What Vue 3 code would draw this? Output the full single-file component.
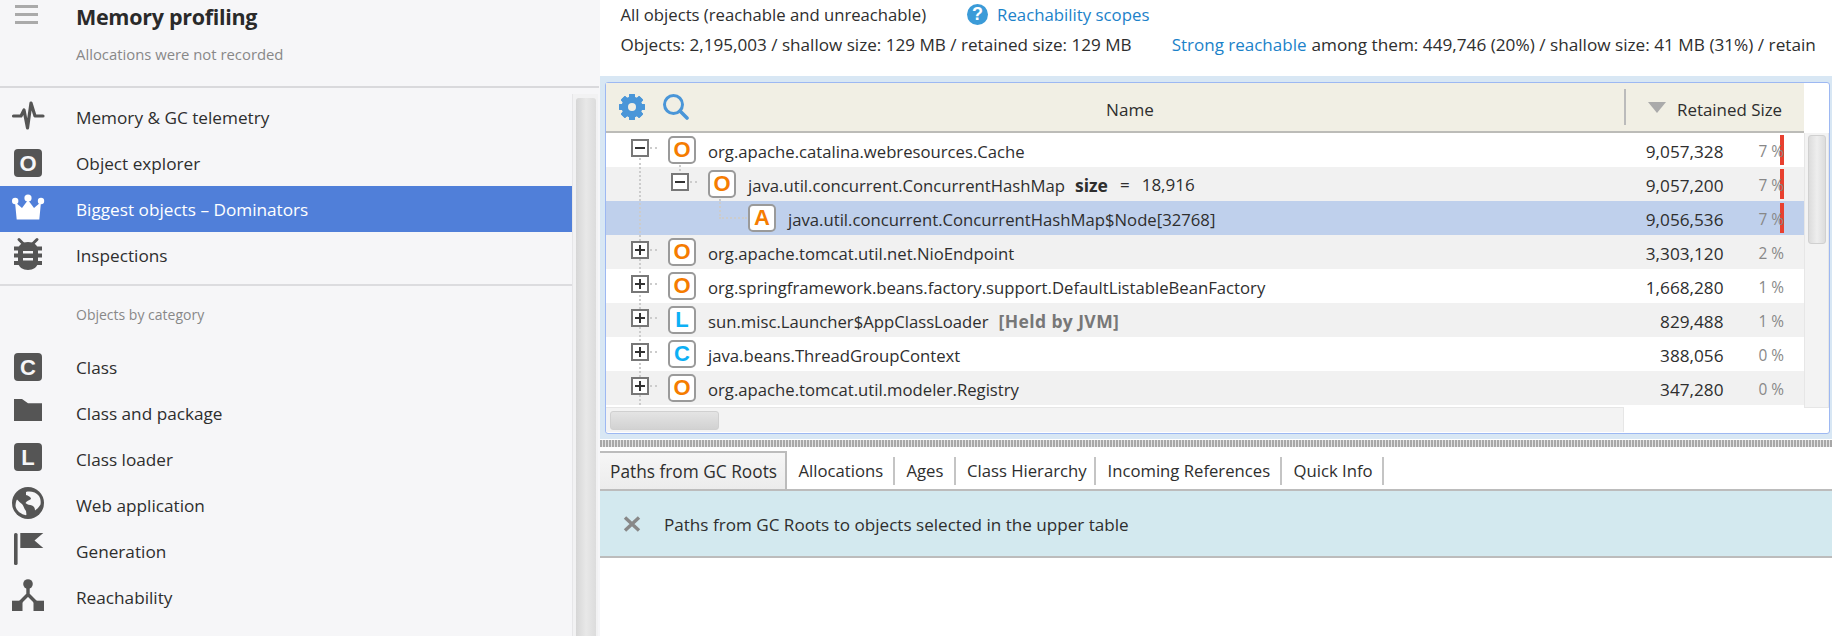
<script setup>
const teeth = [0, 45, 90, 135, 180, 225, 270, 315]
const rows = [
  { level: 0, toggle: 'minus', kind: 'O', name: 'org.apache.catalina.webresources.Cache', num: '9,057,328', pct: '7 %', bar: true, tone: 'white' },
  { level: 1, toggle: 'minus', kind: 'O', name: 'java.util.concurrent.ConcurrentHashMap', field: true, num: '9,057,200', pct: '7 %', bar: true, tone: 'gray' },
  { level: 2, toggle: '', kind: 'A', name: 'java.util.concurrent.ConcurrentHashMap$Node[32768]', num: '9,056,536', pct: '7 %', bar: true, tone: 'sel' },
  { level: 0, toggle: 'plus', kind: 'O', name: 'org.apache.tomcat.util.net.NioEndpoint', num: '3,303,120', pct: '2 %', tone: 'gray' },
  { level: 0, toggle: 'plus', kind: 'O', name: 'org.springframework.beans.factory.support.DefaultListableBeanFactory', num: '1,668,280', pct: '1 %', tone: 'white' },
  { level: 0, toggle: 'plus', kind: 'L', name: 'sun.misc.Launcher$AppClassLoader', held: '[Held by JVM]', num: '829,488', pct: '1 %', tone: 'gray' },
  { level: 0, toggle: 'plus', kind: 'C', name: 'java.beans.ThreadGroupContext', num: '388,056', pct: '0 %', tone: 'white' },
  { level: 0, toggle: 'plus', kind: 'O', name: 'org.apache.tomcat.util.modeler.Registry', num: '347,280', pct: '0 %', tone: 'gray' }
]
const tabs = [
  { label: 'Paths from GC Roots', width: 187 },
  { label: 'Allocations', width: 108 },
  { label: 'Ages', width: 60.5 },
  { label: 'Class Hierarchy', width: 140.5 },
  { label: 'Incoming References', width: 186 },
  { label: 'Quick Info', width: 102 }
]
</script>

<template>
  <div class="app">
    <aside class="side">
      <header class="side-head">
        <div class="burger"><i></i><i></i><i></i></div>
        <div class="head-text">
          <h1>Memory profiling</h1>
          <p>Allocations were not recorded</p>
        </div>
      </header>
      <div class="side-body">
        <nav class="nav">
          <div class="nav-row">
            <svg viewBox="0 0 32 32"><path d="M1.5 15H9L12 9L15.5 27L19 2L23 15H31" fill="none" stroke="#555" stroke-width="3.2" stroke-linecap="round" stroke-linejoin="round"/></svg>
            <span>Memory &amp; GC telemetry</span>
          </div>
          <div class="nav-row">
            <svg viewBox="0 0 32 32"><rect x="2" y="2" width="28" height="28" rx="4" fill="#555"/><text x="16" y="23.5" class="badge">O</text></svg>
            <span>Object explorer</span>
          </div>
          <div class="nav-row active">
            <svg viewBox="0 0 32 32" fill="#fff"><circle cx="3.2" cy="8" r="3.2"/><circle cx="16" cy="5" r="3.6"/><circle cx="29" cy="8" r="3.2"/><path d="M4.7 26.5L3 9L10 15L16 7L22 15L29 9L27.3 26.5Z"/></svg>
            <span>Biggest objects – Dominators</span>
          </div>
          <div class="nav-row">
            <svg viewBox="0 0 32 32" fill="#555">
              <path d="M7 0.5L11.5 5M25 0.5L20.5 5" stroke="#555" stroke-width="3" stroke-linecap="round"/>
              <path d="M6 12C6 6 10 3 16 3C22 3 26 6 26 12V23C26 28 21 31 16 31C11 31 6 28 6 23Z"/>
              <path d="M2 7.5H30V11.5H2ZM2 14.5H30V18.5H2ZM2 22H30V26H2Z"/>
              <path d="M11 12H21V14.5H11ZM11 19H21V21.5H11Z" fill="#f6f6f8"/>
            </svg>
            <span>Inspections</span>
          </div>
          <div class="nav-sep"></div>
          <div class="nav-cat">Objects by category</div>
          <div class="nav-row">
            <svg viewBox="0 0 32 32"><rect x="2" y="2" width="28" height="28" rx="4" fill="#555"/><text x="16" y="23.5" class="badge">C</text></svg>
            <span>Class</span>
          </div>
          <div class="nav-row">
            <svg viewBox="0 0 32 32"><path d="M2 2H10L16 6.3H30V24H2Z" fill="#555"/></svg>
            <span>Class and package</span>
          </div>
          <div class="nav-row">
            <svg viewBox="0 0 32 32"><rect x="2" y="0" width="28" height="28" rx="4" fill="#555"/><text x="16" y="21.5" class="badge">L</text></svg>
            <span>Class loader</span>
          </div>
          <div class="nav-row">
            <svg viewBox="0 0 32 32">
              <circle cx="16" cy="14" r="16" fill="#555"/>
              <path d="M3.5 17C3.5 14.5 4 12 5 10.5C7 12 8 14 10 15C12 17 12 20 14 22C14 24 15 25.5 14 26.3C8 25 4 21 3.5 17Z" fill="#f6f6f8"/>
              <path d="M14 3C18 1.8 24 3 27 7C28.5 9.5 29 12 28.5 15.5C27.5 17 25.5 20 23 21.5C23 19 22 17.5 20 16.5C18 15.5 15 16 13.5 14C14.5 12 17 11.5 19 10C19 8 16 6.5 14 6Z" fill="#f6f6f8"/>
            </svg>
            <span>Web application</span>
          </div>
          <div class="nav-row">
            <svg viewBox="0 0 32 32" fill="#555"><rect x="2" y="-2" width="3.6" height="32" rx="1.6"/><path d="M8.3 -2H31.3L22.5 5.5L31.3 13H8.3Z"/></svg>
            <span>Generation</span>
          </div>
          <div class="nav-row">
            <svg viewBox="0 0 32 32" fill="#555">
              <circle cx="16" cy="3" r="4.8"/>
              <path d="M16 5V13.5M7 22.5L16 13.5L25 22.5" fill="none" stroke="#555" stroke-width="3.4"/>
              <rect x="0" y="19.7" width="10.5" height="10.3"/><rect x="21.5" y="19.7" width="10.5" height="10.3"/>
            </svg>
            <span>Reachability</span>
          </div>
        </nav>
        <div class="side-scroll"><div class="side-thumb"></div></div>
      </div>
    </aside>

    <main class="main">
      <section class="info">
        <div class="info-line first">
          <span class="all">All objects (reachable and unreachable)</span>
          <span class="help">?</span>
          <a class="link">Reachability scopes</a>
        </div>
        <div class="info-line second">
          <span class="stat1">Objects: 2,195,003 / shallow size: 129 MB / retained size: 129 MB</span>
          <a class="link">Strong reachable</a>
          <span class="stat2">among them: 449,746 (20%) / shallow size: 41 MB (31%) / retain</span>
        </div>
      </section>

      <section class="glow">
        <div class="panel">
          <div class="table-col">
            <div class="thead">
              <div class="tools">
                <svg class="tool" viewBox="0 0 26 26">
                  <g fill="#4a96d8"><rect v-for="a in teeth" :key="a" x="10" y="0" width="6" height="26" rx="1" :transform="`rotate(${a} 13 13)`"/></g>
                  <circle cx="13" cy="13" r="8" fill="none" stroke="#4a96d8" stroke-width="5"/>
                  <circle cx="13" cy="13" r="4" fill="#f1efe4"/>
                </svg>
                <svg class="tool" viewBox="0 0 26 26">
                  <circle cx="10.5" cy="10.5" r="9" fill="none" stroke="#4a96d8" stroke-width="3"/>
                  <path d="M17 17L24 24" stroke="#4a96d8" stroke-width="3.6" stroke-linecap="round"/>
                </svg>
              </div>
              <div class="th-name">Name</div>
              <div class="th-size"><i class="sort"></i><span>Retained Size</span></div>
            </div>
            <div class="rows">
              <div v-for="r in rows" :key="r.name" class="row" :class="r.tone">
                <div class="cell-name" :class="'lv' + r.level">
                  <svg v-if="r.toggle" class="toggle" viewBox="0 0 18 18">
                    <path d="M19 9H29" stroke="#ccc" stroke-width="2" stroke-dasharray="2 3"/>
                    <rect x="1" y="1" width="16" height="16" fill="#fff" stroke="#777" stroke-width="2"/>
                    <path d="M4 9H14" stroke="#333" stroke-width="2"/>
                    <path v-if="r.toggle === 'plus'" d="M9 4V14" stroke="#333" stroke-width="2"/>
                  </svg>
                  <span v-else class="toggle"></span>
                  <span class="kind" :class="'k' + r.kind">{{ r.kind }}</span>
                  <span class="label">{{ r.name }}</span>
                  <span v-if="r.field" class="field"><b>size</b><span class="eq">=</span><span>18,916</span></span>
                  <b v-if="r.held" class="held">{{ r.held }}</b>
                </div>
                <div class="num">{{ r.num }}</div>
                <div class="pct"><i v-if="r.bar" class="bar"></i><span>{{ r.pct }}</span></div>
              </div>
              <i class="line-main"></i>
              <i class="line-second"></i>
              <i class="line-elbow"></i>
            </div>
            <div class="hscroll"><div class="htrack"><div class="hthumb"></div></div></div>
          </div>
          <div class="scroll-col">
            <div class="vtrack"><div class="vthumb"></div></div>
          </div>
        </div>
      </section>

      <div class="splitter"></div>

      <div class="tabs">
        <div v-for="(t, i) in tabs" :key="t.label" class="tab" :class="{ on: i === 0 }" :style="{ width: t.width + 'px' }">{{ t.label }}</div>
      </div>

      <div class="notice">
        <svg class="close" viewBox="0 0 18 16"><path d="M2 1.5L16 14.5M16 1.5L2 14.5" stroke="#888" stroke-width="3.4"/></svg>
        <span>Paths from GC Roots to objects selected in the upper table</span>
      </div>
    </main>
  </div>
</template>

<style>
html, body { margin: 0; background: #fff; }
</style>

<style scoped>
.app {
  width: 1832px;
  height: 636px;
  overflow: hidden;
  display: flex;
  font-family: "Open Sans", "Liberation Sans", sans-serif;
  font-size: 17.1px;
  color: #2e2e2e;
}
.side { width: 600px; flex: none; background: #f6f6f8; display: flex; flex-direction: column; }
.side-head { height: 86px; box-sizing: content-box; border-bottom: 2px solid #d9d9dc; display: flex; margin-right: 1px; }
.burger { width: 23px; height: 19px; margin: 5px 0 0 15px; display: flex; flex-direction: column; gap: 5px; }
.burger i { height: 3px; background: #aaa; display: block; }
.head-text { margin-left: 38px; }
h1 { margin: 3px 0 0; font-size: 21.5px; line-height: 28px; font-weight: 700; color: #2a2a2a; letter-spacing: -0.3px; }
.head-text p { margin: 13px 0 0; font-size: 14.85px; line-height: 20px; color: #888; }
.side-body { flex: 1; display: flex; min-height: 0; }
.nav { width: 572px; flex: none; padding-top: 6px; }
.nav-row { height: 46px; display: flex; align-items: center; padding-left: 12px; }
.nav-row span { font-size: 17.2px; }
.nav-row svg { width: 32px; height: 32px; margin-right: 32px; flex: none; overflow: visible; }
.nav-row.active { background: #507fd9; color: #fff; }
.nav-sep { height: 2px; background: #dcdcdf; margin-top: 6px; }
.nav-cat { height: 58px; box-sizing: border-box; padding: 19px 0 0 76px; line-height: 20px; font-size: 14px; color: #888; }
.badge { font-family: "Liberation Sans", sans-serif; font-weight: 700; font-size: 22px; fill: #f6f6f8; text-anchor: middle; }
.side-scroll { width: 26px; flex: none; background: #f2f2f3; border-left: 1px solid #e6e6e8; box-sizing: border-box; padding: 4px 2px 0 3px; margin-top: 6px; }
.side-thumb { height: 100%; border-radius: 3px 3px 0 0; background: linear-gradient(90deg, #d6d6d6, #e8e8e8 50%, #dcdcdc); }

.main { flex: 1; min-width: 0; display: flex; flex-direction: column; background: #fff; }
.info { height: 76px; box-sizing: border-box; padding: 2px 15px 0 20.5px; overflow: hidden; }
.info-line { display: flex; align-items: center; white-space: nowrap; height: 24px; }
.info-line.second { margin-top: 6px; }
.all { font-size: 16.7px; }
.help { width: 21px; height: 21px; margin-left: 41px; border-radius: 50%; background: #3b9bd8; color: #fff; font-weight: 700; font-size: 18px; line-height: 21px; text-align: center; font-family: "Liberation Sans", sans-serif; }
.first .link { margin-left: 9px; font-size: 16.8px; }
.link { color: #1b82c9; }
.second .link { margin-left: 40px; font-size: 17px; }
.stat2 { margin-left: 5px; font-size: 17.2px; }

.glow { height: 363px; box-sizing: border-box; background: #d8e7f4; padding: 6px 2px 5px 5px; }
.panel { height: 100%; box-sizing: border-box; border: 1px solid #9db8f2; border-radius: 3px; background: #fff; display: flex; }
.table-col { width: 1198px; flex: none; display: flex; flex-direction: column; }
.thead { height: 50px; box-sizing: border-box; background: #f1efe4; border-bottom: 2px solid #bcbcb8; display: flex; align-items: center; }
.tools { display: flex; gap: 18px; padding-left: 13px; flex: none; }
.tool { width: 26px; height: 26px; flex: none; }
.th-name { flex: 1; text-align: center; padding: 4px 53px 0 0; }
.th-size { width: 180px; flex: none; box-sizing: border-box; height: 36px; border-left: 2px solid #bbb; display: flex; align-items: center; padding-left: 22px; font-size: 16.9px; }
.th-size span { position: relative; top: 2px; }
.sort { width: 0; height: 0; border-left: 9px solid transparent; border-right: 9px solid transparent; border-top: 11px solid #aaa; margin-right: 11px; }
.rows { position: relative; }
.row { height: 34px; display: flex; align-items: center; padding-right: 20px; }
.row.white { background: #fff; }
.row.gray { background: #f1f1f1; }
.row.sel { background: #bfd0ec; }
.cell-name { flex: 1; min-width: 0; display: flex; align-items: center; white-space: nowrap; padding-left: 25px; font-size: 16.7px; }
.cell-name.lv1 { padding-left: 65px; }
.cell-name.lv2 { padding-left: 105px; }
.toggle { width: 18px; height: 18px; flex: none; overflow: visible; margin-top: -4px; position: relative; z-index: 2; }
.kind { width: 28px; height: 28px; box-sizing: border-box; margin-left: 19px; border: 2px solid #9a9a9a; border-radius: 5px; background: #fff; display: flex; align-items: center; justify-content: center; font-family: "Liberation Sans", sans-serif; font-weight: 700; font-size: 22px; position: relative; z-index: 2; }
.kO, .kA { color: #f57c00; }
.kL, .kC { color: #0db0f5; }
.label { margin-left: 12px; position: relative; top: 1px; }
.field { margin-left: 10px; display: flex; position: relative; top: 1px; font-size: 17px; }
.eq { margin: 0 12px; }
.field b { font-weight: 700; font-size: 17.5px; }
.held { margin-left: 10px; font-weight: 700; color: #777; font-size: 17.5px; letter-spacing: 0.4px; position: relative; top: 1px; }
.num { text-align: right; font-size: 17.2px; position: relative; top: 1px; }
.pct { width: 60.5px; height: 100%; text-align: right; position: relative; display: flex; align-items: center; justify-content: flex-end; font-size: 15.4px; color: #888; }
.pct span { position: relative; top: 1px; }
.bar { position: absolute; right: 0; top: 2px; bottom: 2px; width: 4px; background: #e8402f; }
.line-main { position: absolute; left: 33px; top: 25px; height: 247px; border-left: 2px dotted #ccc; }
.line-second { position: absolute; left: 73px; top: 32px; height: 10px; border-left: 2px dotted #ccc; }
.line-elbow { position: absolute; left: 113px; top: 66px; width: 26px; height: 18px; border-left: 2px dotted #ccc; border-bottom: 2px dotted #ccc; }
.hscroll { flex: 1; padding-top: 2px; }
.htrack { width: 1018px; height: 25px; background: #f3f3f3; border-top: 1px solid #e6e6e6; border-right: 1px solid #e6e6e6; box-sizing: border-box; padding: 3px 0 0 4px; }
.hthumb { width: 109px; height: 19px; border-radius: 3px; background: linear-gradient(#e4e4e4, #d2d2d2); border: 1px solid #d0d0d0; box-sizing: border-box; }
.scroll-col { flex: 1; padding-top: 50px; }
.vtrack { height: 275px; box-sizing: border-box; background: #f3f3f3; border: 1px solid #e6e6e6; border-top: 0; padding: 2px 2px 0 3px; }
.vthumb { height: 109px; border-radius: 3px; background: linear-gradient(90deg, #dcdcdc, #eeeeee 50%, #dcdcdc); border: 1px solid #d0d0d0; box-sizing: border-box; }

.splitter { height: 7px; margin-top: 1px; background: repeating-linear-gradient(90deg, #a8a8a8 0 2px, #e2e2e2 2px 3px); flex: none; }
.tabs { margin-top: 4px; height: 40px; box-sizing: border-box; border-bottom: 2px solid #bcbcbc; display: flex; flex: none; font-size: 16.7px; }
.tab { height: 28px; line-height: 28px; margin-top: 6px; box-sizing: border-box; padding-left: 11.5px; border-right: 2px solid #c4c4c4; white-space: nowrap; flex: none; }
.tab.on { height: 38px; line-height: 38px; margin-top: 0; padding-left: 10px; font-size: 17.3px; background: linear-gradient(#f6f6f6, #ececec); border-top: 2px solid #bcbcbc; border-right: 2px solid #bcbcbc; }
.notice { height: 67px; box-sizing: border-box; background: #d3e9ef; border-bottom: 2px solid #bcbcbc; display: flex; align-items: center; padding-left: 23px; flex: none; }
.notice span { position: relative; top: 1px; }
.close { width: 18px; height: 16px; margin-right: 23px; flex: none; }
</style>
